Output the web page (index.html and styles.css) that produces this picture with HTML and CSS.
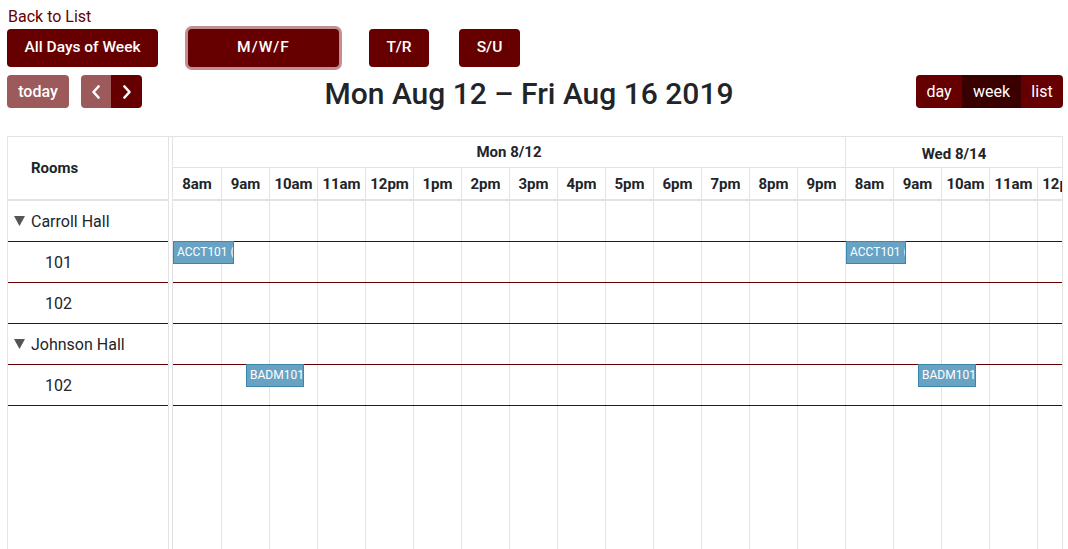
FILE: index.html
```html
<!DOCTYPE html>
<html lang="en">
<head>
<meta charset="utf-8">
<title>Room Schedule</title>
<link rel="stylesheet" href="styles.css">
</head>
<body>
<div class="page">
  <a class="back" href="#">Back to List</a>
  <div class="filters">
    <button class="fbtn fbtn-all">All Days of Week</button>
    <button class="fbtn fbtn-mwf">M/W/F</button>
    <button class="fbtn fbtn-tr">T/R</button>
    <button class="fbtn fbtn-su">S/U</button>
  </div>
  <div class="toolbar">
    <div class="tb-left">
      <button class="tbtn faded today">today</button>
      <div class="btn-group">
        <button class="tbtn faded icon-btn prev"><svg width="10" height="14" viewBox="0 0 10 14"><polyline points="7.5,1.5 2.5,7 7.5,12.5" fill="none" stroke="#fff" stroke-width="2.6" stroke-linecap="round" stroke-linejoin="round"/></svg></button>
        <button class="tbtn icon-btn next"><svg width="10" height="14" viewBox="0 0 10 14"><polyline points="2.5,1.5 7.5,7 2.5,12.5" fill="none" stroke="#fff" stroke-width="2.6" stroke-linecap="round" stroke-linejoin="round"/></svg></button>
      </div>
    </div>
    <h2 class="title">Mon Aug 12 – Fri Aug 16 2019</h2>
    <div class="btn-group">
      <button class="tbtn v-day">day</button>
      <button class="tbtn v-week active">week</button>
      <button class="tbtn v-list">list</button>
    </div>
  </div>

  <div class="timeline">
    <div class="res-area">
      <div class="res-head">Rooms</div>
      <div class="row group"><svg class="tri" width="11" height="10" viewBox="0 0 11 10"><polygon points="0,0 11,0 5.5,10" fill="#555"/></svg>Carroll Hall</div>
      <div class="row child">101</div>
      <div class="row child">102</div>
      <div class="row group"><svg class="tri" width="11" height="10" viewBox="0 0 11 10"><polygon points="0,0 11,0 5.5,10" fill="#555"/></svg>Johnson Hall</div>
      <div class="row child">102</div>
    </div>
    <div class="divider"></div>
    <div class="time-area">
      <div class="date-row">
        <div class="date-cell day-mon">Mon 8/12</div>
        <div class="date-cell day-wed">Wed 8/14</div>
      </div>
      <div class="slot-row">
        <div class="slot">8am</div>
        <div class="slot">9am</div>
        <div class="slot">10am</div>
        <div class="slot">11am</div>
        <div class="slot">12pm</div>
        <div class="slot">1pm</div>
        <div class="slot">2pm</div>
        <div class="slot">3pm</div>
        <div class="slot">4pm</div>
        <div class="slot">5pm</div>
        <div class="slot">6pm</div>
        <div class="slot">7pm</div>
        <div class="slot">8pm</div>
        <div class="slot">9pm</div>
        <div class="slot">8am</div>
        <div class="slot">9am</div>
        <div class="slot">10am</div>
        <div class="slot">11am</div>
        <div class="slot">12pm</div>
      </div>
      <div class="time-body">
        <div class="trow"></div>
        <div class="trow">
          <div class="event" style="left:0px;width:61px">ACCT101 (</div>
          <div class="event" style="left:673px;width:60px">ACCT101 (</div>
        </div>
        <div class="trow"></div>
        <div class="trow"></div>
        <div class="trow">
          <div class="event" style="left:73px;width:58px">BADM101</div>
          <div class="event" style="left:745px;width:58px">BADM101</div>
        </div>
      </div>
    </div>
  </div>
</div>
</body>
</html>
```

FILE: styles.css
```css
* { box-sizing: border-box; }

html, body {
  margin: 0;
  background: #fff;
}

body {
  font-family: Roboto, "Noto Sans", sans-serif;
  color: #212529;
  height: 549px;
  overflow: hidden;
}

.page {
  padding: 7px 5px 0 7px;
}

.back {
  display: block;
  width: max-content;
  margin-left: 1px;
  color: #660000;
  font-size: 16px;
  line-height: 20px;
  text-decoration: none;
}

/* day-of-week filter buttons */
.filters {
  display: flex;
  gap: 30px;
  margin-top: 2px;
}

.fbtn {
  height: 38px;
  padding: 0;
  border: 0;
  border-radius: 4px;
  background: #660000;
  color: #fff;
  font: 500 15.5px/1 Roboto, sans-serif;
  display: flex;
  align-items: center;
  justify-content: center;
}

.fbtn-all { width: 151px; }
.fbtn-mwf { width: 151px; box-shadow: 0 0 0 3px #c18f91; letter-spacing: 1px; }
.fbtn-tr { width: 60px; }
.fbtn-su { width: 61px; }

/* calendar toolbar */
.toolbar {
  display: flex;
  align-items: center;
  justify-content: space-between;
  height: 33px;
  margin-top: 8px;
}

.tb-left {
  display: flex;
  gap: 12px;
}

.btn-group { display: flex; }

.tbtn {
  height: 33px;
  padding: 0;
  border: 0;
  background: #660000;
  color: #fff;
  font: 400 16px/1 Roboto, sans-serif;
  display: flex;
  align-items: center;
  justify-content: center;
}

.btn-group .tbtn:first-child { border-radius: 4px 0 0 4px; }
.btn-group .tbtn:last-child { border-radius: 0 4px 4px 0; }

.today {
  width: 62px;
  border-radius: 4px;
  font-weight: 500;
}

.faded { background: #9c5a5b; }

.prev { width: 30px; }
.next { width: 31px; }

.v-day { width: 46px; }
.v-week { width: 59px; }
.v-list { width: 42px; }
.active { background: #3a0000; }

.title {
  margin: 4px 0 0;
  font: 500 30px/1 Roboto, sans-serif;
  color: #212529;
}

/* timeline */
.timeline {
  display: flex;
  height: 430px;
  margin-top: 28px;
  border-top: 1px solid #e3e3e3;
}

.res-area {
  flex: none;
  width: 162px;
  border-left: 1px solid #e3e3e3;
  border-right: 1px solid #e3e3e3;
}

.res-head {
  height: 64px;
  border-bottom: 2px solid #e3e3e3;
  display: flex;
  align-items: center;
  padding-left: 23px;
  font-weight: 700;
  font-size: 15px;
}

.row {
  height: 41px;
  border-bottom: 1px solid #660000;
  display: flex;
  align-items: center;
  font-size: 16px;
}

.group { padding-left: 6px; }
.tri { margin-right: 6px; flex: none; }
.child { padding-left: 37px; }

.divider {
  flex: none;
  width: 4px;
  border-right: 1px solid #e3e3e3;
}

.time-area {
  flex: none;
  width: 890px;
  border-right: 1px solid #e3e3e3;
  overflow: hidden;
  display: flex;
  flex-direction: column;
}

.date-row {
  display: flex;
  height: 31px;
  border-bottom: 1px solid #e3e3e3;
}

.date-cell {
  display: flex;
  align-items: center;
  justify-content: center;
  font-weight: 700;
  font-size: 15px;
}

.day-mon { flex: none; width: 672px; }
.day-wed { flex: 1; border-left: 1px solid #e3e3e3; padding-top: 3px; }

.slot-row {
  display: flex;
  height: 33px;
  border-bottom: 2px solid #e3e3e3;
}

.slot {
  flex: none;
  width: 48px;
  border-left: 1px solid #e3e3e3;
  display: flex;
  align-items: center;
  justify-content: center;
  font-weight: 700;
  font-size: 15px;
}

.slot:first-child { border-left: 0; }

.time-body {
  flex: 1;
  background:
    linear-gradient(#fff, #fff) 0 0 / 1px 100% no-repeat,
    linear-gradient(to right, #e3e3e3 1px, transparent 1px) 0 0 / 48px 100% repeat-x;
}

.trow {
  position: relative;
  height: 41px;
  border-bottom: 1px solid #660000;
}

.event {
  position: absolute;
  top: -1px;
  height: 23px;
  padding-left: 3px;
  background: #68a3c4;
  border: 1px solid #3a87ad;
  color: #fff;
  font-size: 12px;
  line-height: 21px;
  white-space: nowrap;
  overflow: hidden;
}
```
